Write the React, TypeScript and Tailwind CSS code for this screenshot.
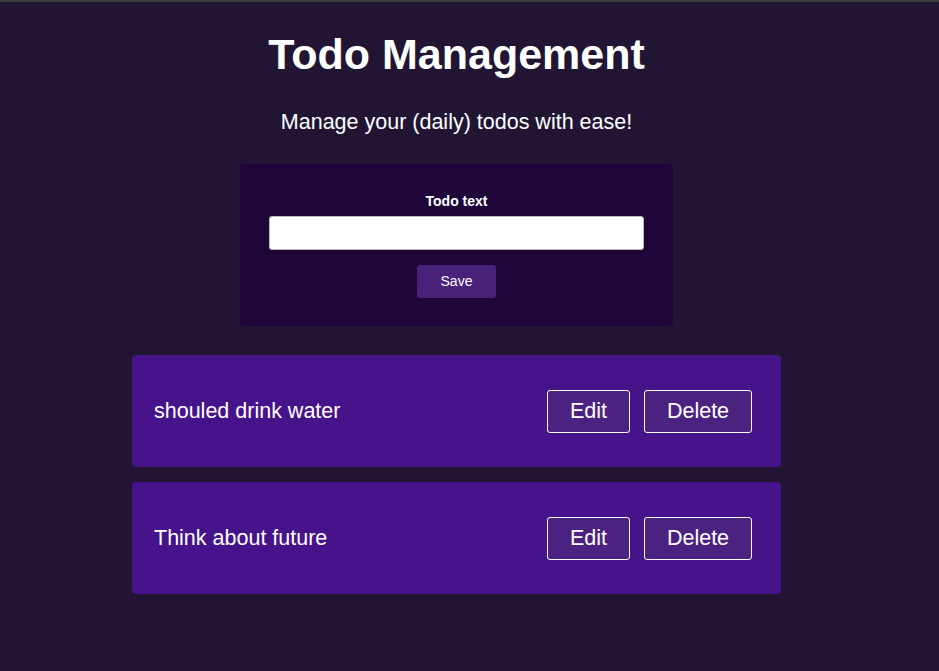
import { useState } from "react";

type Todo = { id: number; text: string };

export default function App() {
  const [text, setText] = useState("");
  const [todos, setTodos] = useState<Todo[]>([
    { id: 1, text: "shouled drink water" },
    { id: 2, text: "Think about future" },
  ]);

  const handleSave = () => {
    if (!text.trim()) return;
    setTodos([...todos, { id: Date.now(), text }]);
    setText("");
  };

  const handleDelete = (id: number) => {
    setTodos(todos.filter((t) => t.id !== id));
  };

  return (
    <main className="min-h-screen border-t-2 border-[#3c3c3c] bg-[#221533] font-['Liberation_Sans',Arial,sans-serif] text-white">
      <div className="flex flex-col items-center pt-[28px] pr-[26px]">
        <h1 className="text-[43px] font-bold leading-[49px]">Todo Management</h1>
        <p className="mt-[31px] text-[21.5px] leading-[25px]">
          Manage your (daily) todos with ease!
        </p>

        <div className="mt-[29px] flex w-[433px] flex-col items-center rounded bg-[#1e0639] px-[29px] pt-[29px] pb-[28px]">
          <label className="text-[14px] font-bold leading-[17px]">Todo text</label>
          <input
            value={text}
            onChange={(e) => setText(e.target.value)}
            className="mt-[6px] h-[34px] w-full rounded-[3px] border border-[#bbb] bg-white px-2 text-black outline-none"
          />
          <button
            onClick={handleSave}
            className="mt-[15px] h-[33px] w-[79px] rounded-[3px] bg-[#4a2179] text-[14px] leading-[33px]"
          >
            Save
          </button>
        </div>

        <ul className="mt-[29px] flex w-[649px] flex-col gap-[15px]">
          {todos.map((todo) => (
            <li
              key={todo.id}
              className="flex h-[112px] items-center justify-between rounded bg-[#46138a] pl-[22px] pr-[29px]"
            >
              <span className="pt-px text-[21.5px]">{todo.text}</span>
              <div className="flex gap-[14px]">
                <button className="h-[43px] w-[83px] rounded-[3px] border border-white bg-[#4b2280] pt-px text-[21.5px]">
                  Edit
                </button>
                <button
                  onClick={() => handleDelete(todo.id)}
                  className="h-[43px] w-[108px] rounded-[3px] border border-white bg-[#4b2280] pt-px text-[21.5px]"
                >
                  Delete
                </button>
              </div>
            </li>
          ))}
        </ul>
      </div>
    </main>
  );
}
